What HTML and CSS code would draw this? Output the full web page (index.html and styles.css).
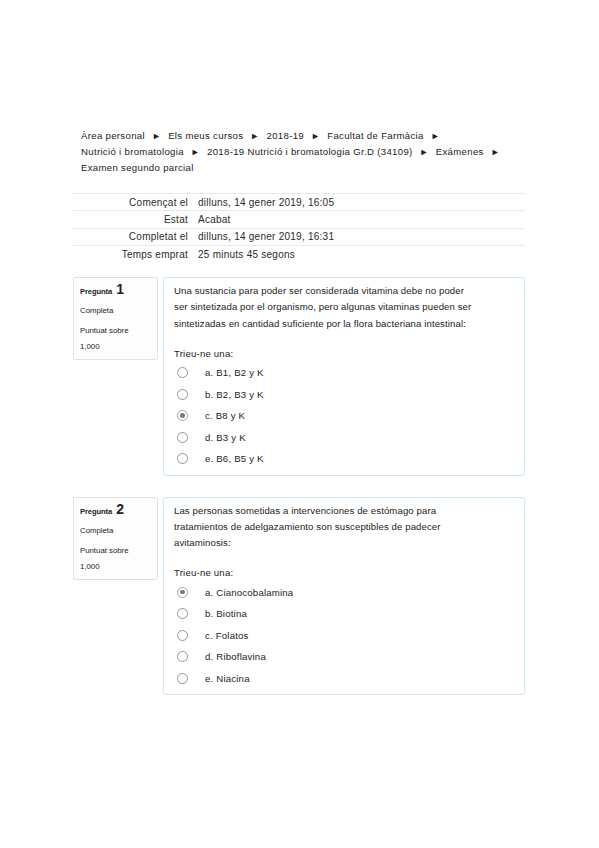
FILE: index.html
```html
<!DOCTYPE html>
<html lang="ca">
<head>
<meta charset="utf-8">
<title>Examen segundo parcial</title>
<link rel="stylesheet" href="styles.css">
</head>
<body>
<div class="page">
  <nav class="crumbs">
    <ul>
      <li>Àrea personal <span class="sep">►</span></li>
      <li>Els meus cursos <span class="sep">►</span></li>
      <li>2018-19 <span class="sep">►</span></li>
      <li>Facultat de Farmàcia <span class="sep">►</span></li>
      <li>Nutrició i bromatologia <span class="sep">►</span></li>
      <li>2018-19 Nutrició i bromatologia Gr.D (34109) <span class="sep">►</span></li>
      <li>Exámenes <span class="sep">►</span></li>
      <li>Examen segundo parcial</li>
    </ul>
  </nav>

  <div class="summary">
    <div class="row"><div class="label">Començat el</div><div class="value">dilluns, 14 gener 2019, 16:05</div></div>
    <div class="row"><div class="label">Estat</div><div class="value">Acabat</div></div>
    <div class="row"><div class="label">Completat el</div><div class="value">dilluns, 14 gener 2019, 16:31</div></div>
    <div class="row"><div class="label">Temps emprat</div><div class="value">25 minuts 45 segons</div></div>
  </div>

  <div class="question">
    <div class="info">
      <h3 class="qno">Pregunta <span class="num">1</span></h3>
      <div class="state">Completa</div>
      <div class="grade">Puntuat sobre<br>1,000</div>
    </div>
    <div class="content">
      <p class="qtext">Una sustancia para poder ser considerada vitamina debe no poder<br>ser sintetizada por el organismo, pero algunas vitaminas pueden ser<br>sintetizadas en cantidad suficiente por la flora bacteriana intestinal:</p>
      <div class="prompt">Trieu-ne una:</div>
      <div class="answers">
        <div class="opt"><span class="radio"></span><span class="otext">a. B1, B2 y K</span></div>
        <div class="opt"><span class="radio"></span><span class="otext">b. B2, B3 y K</span></div>
        <div class="opt"><span class="radio checked"></span><span class="otext">c. B8 y K</span></div>
        <div class="opt"><span class="radio"></span><span class="otext">d. B3 y K</span></div>
        <div class="opt"><span class="radio"></span><span class="otext">e. B6, B5 y K</span></div>
      </div>
    </div>
  </div>

  <div class="question q2">
    <div class="info">
      <h3 class="qno">Pregunta <span class="num">2</span></h3>
      <div class="state">Completa</div>
      <div class="grade">Puntuat sobre<br>1,000</div>
    </div>
    <div class="content">
      <p class="qtext">Las personas sometidas a intervenciones de estómago para<br>tratamientos de adelgazamiento son susceptibles de padecer<br>avitaminosis:</p>
      <div class="prompt">Trieu-ne una:</div>
      <div class="answers">
        <div class="opt"><span class="radio checked"></span><span class="otext">a. Cianocobalamina</span></div>
        <div class="opt"><span class="radio"></span><span class="otext">b. Biotina</span></div>
        <div class="opt"><span class="radio"></span><span class="otext">c. Folatos</span></div>
        <div class="opt"><span class="radio"></span><span class="otext">d. Riboflavina</span></div>
        <div class="opt"><span class="radio"></span><span class="otext">e. Niacina</span></div>
      </div>
    </div>
  </div>
</div>
</body>
</html>
```

FILE: styles.css
```css
html, body {
  margin: 0;
  padding: 0;
  background: #ffffff;
}

body {
  font-family: "Liberation Sans", Arial, sans-serif;
  color: #222222;
  font-size: 10px;
}

.page {
  width: 452px;
  margin-left: 73px;
  padding-top: 128px;
}

.crumbs ul {
  list-style: none;
  margin: 0;
  padding: 0 0 0 8px;
  line-height: 16px;
  font-size: 9.6px;
  letter-spacing: 0.32px;
}

.crumbs li {
  display: inline;
  white-space: nowrap;
  margin-right: 4px;
}

.crumbs .sep {
  font-size: 9px;
  margin-left: 4px;
}

.summary {
  margin-top: 17px;
  font-size: 10px;
  letter-spacing: 0.25px;
  color: #2a2a2a;
}

.summary .row {
  display: grid;
  grid-template-columns: 120px 1fr;
  border-top: 1.5px solid #e8e8e8;
  box-sizing: border-box;
  height: 17.3px;
  align-items: center;
}

.summary .label {
  text-align: right;
  padding-right: 5px;
}

.summary .value {
  padding-left: 5px;
}

.question {
  display: flex;
  align-items: flex-start;
  gap: 5px;
  margin-top: 15px;
}

.question.q2 {
  margin-top: 21px;
}

.info {
  width: 85px;
  box-sizing: border-box;
  border: 1px solid #e2e2e2;
  border-radius: 2px;
  background: #fdfdfd;
  padding: 3px 6px 4px;
  font-size: 7.8px;
}

.qno {
  margin: 0;
  font-size: 7.6px;
  font-weight: bold;
  line-height: 16px;
  letter-spacing: -0.1px;
}

.qno .num {
  font-size: 14px;
  letter-spacing: 0;
  margin-left: 2px;
}

.state {
  margin-top: 5px;
  line-height: 12px;
}

.grade {
  margin-top: 6px;
  line-height: 16px;
}

.content {
  flex: 1;
  border: 1px solid #cfe8f3;
  border-radius: 3px;
  padding: 5px 11px 5px 10px;
  font-size: 9.6px;
  letter-spacing: 0.2px;
}

.qtext {
  margin: 0;
  line-height: 16.3px;
  letter-spacing: 0.1px;
}

.prompt {
  margin-top: 14px;
  line-height: 16px;
}

.opt {
  display: flex;
  align-items: center;
  height: 21.5px;
  padding-left: 3px;
}

.radio {
  width: 11px;
  height: 11px;
  border: 1.2px solid #959595;
  border-radius: 50%;
  box-sizing: border-box;
  background: #fff;
  position: relative;
  flex: none;
}

.radio.checked {
  border-color: #a5a5a5;
}

.radio.checked::after {
  content: "";
  position: absolute;
  left: 2px;
  top: 2px;
  width: 4.6px;
  height: 4.6px;
  border-radius: 50%;
  background: #7a7a7a;
}

.otext {
  margin-left: 17px;
}
```
